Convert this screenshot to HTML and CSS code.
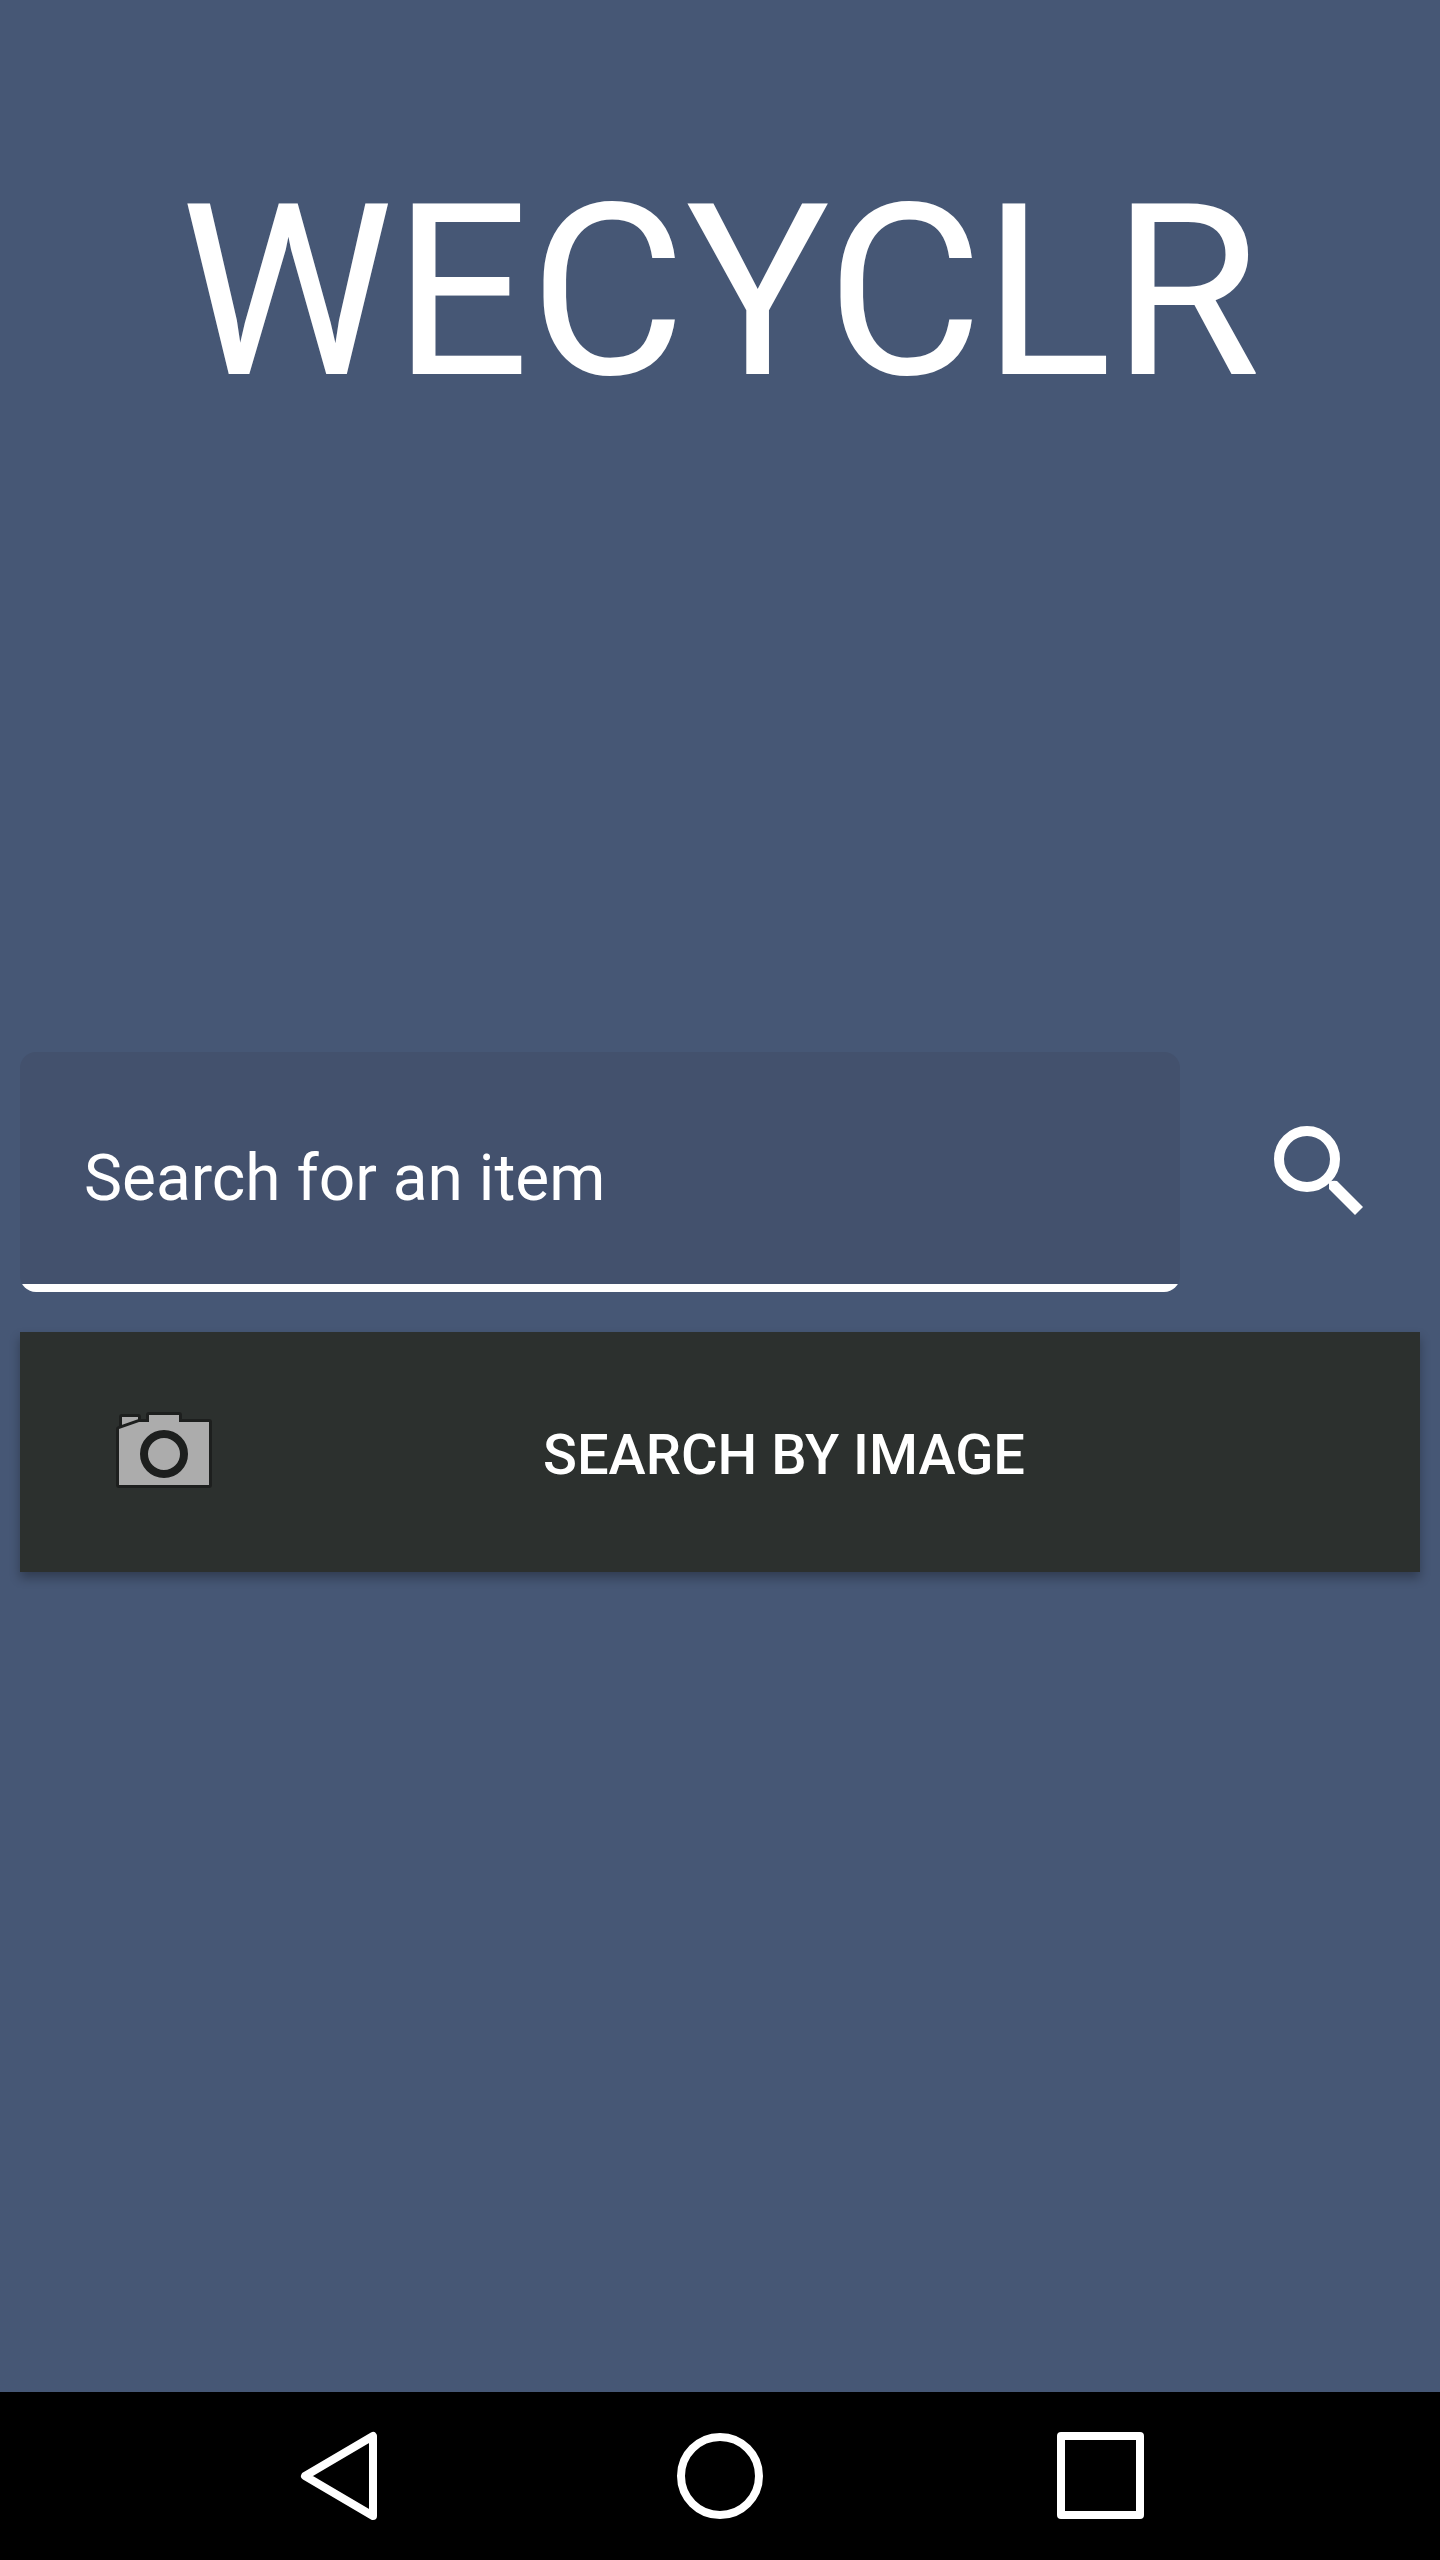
FILE: index.html
```html
<!DOCTYPE html>
<html lang="en">
<head>
  <meta charset="utf-8">
  <meta name="viewport" content="width=device-width, initial-scale=1">
  <title>WECYCLR</title>
  <link rel="stylesheet" href="styles.css">
</head>
<body class="screen">
  <header class="header">
    <h1 class="title">WECYCLR</h1>
  </header>

  <main class="main">
    <form class="search">
      <div class="search-row">
        <input class="search-input" type="text" placeholder="Search for an item" aria-label="Search for an item">
        <button class="search-button" type="submit" aria-label="Search">
          <svg class="search-icon" viewBox="0 0 96 96" aria-hidden="true">
            <circle cx="37" cy="35" r="28" fill="none" stroke="#fff" stroke-width="10"/>
            <path d="M59 58V65L85 91L93 83L67 57Q63 56 59 58Z" fill="#fff"/>
          </svg>
        </button>
      </div>
      <button class="image-button" type="button">
        <svg class="camera-icon" viewBox="0 0 128 128" aria-hidden="true">
          <g fill="#acacac" stroke="#1d1f1e" stroke-width="6" stroke-linejoin="round" paint-order="stroke">
            <path d="M22 29H38V32L22 38Z"/>
            <path d="M19 41L39 34H49V27H79V34H109V97H19Z"/>
          </g>
          <circle cx="64" cy="66" r="20" fill="none" stroke="#1d1f1e" stroke-width="8"/>
        </svg>
        <span class="image-label">SEARCH BY IMAGE</span>
      </button>
    </form>
  </main>

  <nav class="navbar" aria-label="System">
    <button class="nav-button" type="button" aria-label="Back">
      <svg class="nav-icon" viewBox="0 0 96 96" aria-hidden="true"><path d="M14 48L82 8V88Z"/></svg>
    </button>
    <button class="nav-button" type="button" aria-label="Home">
      <svg class="nav-icon" viewBox="0 0 96 96" aria-hidden="true"><circle cx="48" cy="48" r="39"/></svg>
    </button>
    <button class="nav-button" type="button" aria-label="Recent apps">
      <svg class="nav-icon" viewBox="0 0 96 96" aria-hidden="true"><rect x="8" y="8" width="79" height="79"/></svg>
    </button>
  </nav>
</body>
</html>
```
FILE: styles.css
```css
* {
  box-sizing: border-box;
}

.screen {
  display: flex;
  flex-direction: column;
  min-height: 100vh;
  margin: 0;
  background: #465775;
  color: #fff;
  font-family: Roboto, sans-serif;
}

button,
input {
  margin: 0;
  padding: 0;
  border: 0;
  border-radius: 0;
  background: none;
  color: inherit;
  font-family: inherit;
}

svg {
  display: block;
}

.header {
  padding: 152px 20px 0;
}

.title {
  margin: 0;
  font-size: 240px;
  font-weight: 400;
  line-height: 280px;
  text-align: center;
}

/* The form sits a little above the middle of the free space. */
.main {
  flex: 1;
  display: grid;
  grid-template-rows: 31fr auto 41fr;
  padding: 0 20px;
}

.search {
  grid-row: 2;
  display: flex;
  flex-direction: column;
  gap: 40px;
}

.search-row {
  display: flex;
  gap: 36px;
}

.search-input {
  flex: 1;
  min-width: 0;
  height: 240px;
  padding: 12px 64px 0;
  border-radius: 16px;
  background: linear-gradient(#fff, #fff) bottom / 100% 8px no-repeat #43516d;
  font-size: 64px;
}

.search-input::placeholder {
  color: #fff;
  opacity: 1;
}

.search-button {
  display: flex;
  align-items: center;
  justify-content: center;
  width: 204px;
}

.search-icon {
  width: 96px;
  height: 96px;
}

.image-button {
  display: flex;
  align-items: center;
  height: 240px;
  padding: 0 80px;
  background: #2c302e;
  box-shadow: 0 6px 10px rgba(0, 0, 0, 0.3);
  font-size: 56px;
  font-weight: 500;
}

.camera-icon {
  width: 128px;
  height: 128px;
}

.image-label {
  flex: 1;
  padding-top: 6px;
  text-align: center;
}

.navbar {
  display: flex;
  align-items: center;
  justify-content: center;
  gap: 285px;
  height: 168px;
  background: #000;
}

.nav-icon {
  width: 96px;
  height: 96px;
  fill: none;
  stroke: #fff;
  stroke-width: 8;
  stroke-linejoin: round;
}
```
